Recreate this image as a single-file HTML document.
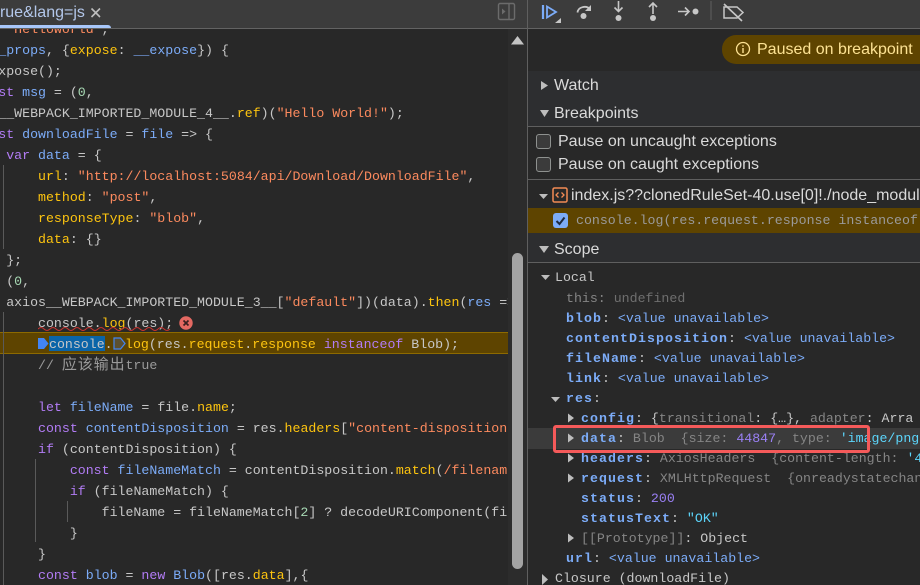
<!DOCTYPE html>
<html style="overflow:hidden"><head><meta charset="utf-8">
<style>
html,body{margin:0;padding:0;background:#282828}
body{width:920px;height:585px;overflow:hidden;font-family:"Liberation Sans","Noto Sans CJK SC",sans-serif}
#wrap{position:absolute;left:0;top:0;width:920px;height:585px;overflow:hidden}
.abs{position:absolute}
#code{position:absolute;left:0;top:29px;width:508px;height:556px;overflow:hidden;background:#282828}
.l,.r{position:absolute;white-space:pre;font-family:"Liberation Mono","Noto Sans CJK SC",monospace;font-size:13.25px;line-height:21px;color:#c7c7c7}
.l{left:-25.6px}
.k{color:#b27cf5}.v{color:#7cacf8}.p{color:#fdc40f}.s{color:#fc8a5e}.n{color:#a8dab5}.c{color:#9a9a9a}
.r b{color:#7cacf8;letter-spacing:1.05px;font-weight:bold}
.u{color:#7cacf8}.g{color:#858585}.d{color:#6f6f6f}.w{color:#c7c7c7}.num{color:#9a80f5}.str{color:#5cd5fb}
.h{position:absolute;left:528px;width:392px;background:#2d2e30}
.sf{position:absolute;white-space:pre;font-size:16px;line-height:20px;color:#dadada}
.cb{position:absolute;left:536px;width:13px;height:13px;border:1px solid #8e918f;border-radius:3px;background:#3b3b3b}
.guide{position:absolute;width:1px;background:#5a5a5a}
</style></head><body><div id="wrap">

<!-- toolbars -->
<div class="abs" style="left:0;top:0;width:920px;height:28px;background:#3c3c3c"></div>
<div class="abs" style="left:0;top:28px;width:920px;height:1px;background:#636363"></div>
<div class="sf" style="left:-4.500px;top:3px;color:#b3c7ea">true&amp;lang=js</div>
<svg class="abs" style="left:90px;top:7px" width="12" height="12"><path d="M1.500 1.500L10 10M10 1.500L1.500 10" stroke="#bdbdbd" stroke-width="1.600" fill="none"/></svg>
<div class="abs" style="left:0;top:25px;width:111px;height:3px;background:#a8c7fa;border-radius:0 3px 0 0"></div>

<svg class="abs" style="left:497px;top:2px" width="20" height="20"><rect x="1.500" y="1.500" width="16" height="16" rx="1.500" fill="none" stroke="#6b6b6b" stroke-width="1.400"/><path d="M12 2v15" stroke="#6b6b6b" stroke-width="1.400"/><path d="M5 6.500l3.500 3-3.500 3z" fill="#6b6b6b"/></svg>

<!-- code -->
<div id="code">
<div class="l" style="top:-10.500px">    <span class="s">"HelloWorld"</span>,</div>
<div class="l" style="top:10.500px">   <span class="v">_props</span>, {<span class="p">expose</span>: <span class="v">__expose</span>}) {</div>
<div class="l" style="top:31.500px">   xpose();</div>
<div class="l" style="top:52.500px"><span class="k">   st</span> <span class="v">msg</span> = (<span class="n">0</span>,</div>
<div class="l" style="top:73.500px">   __WEBPACK_IMPORTED_MODULE_4__.<span class="p">ref</span>)(<span class="s">"Hello World!"</span>);</div>
<div class="l" style="top:94.500px"><span class="k">   st</span> <span class="v">downloadFile</span> = <span class="v">file</span> =&gt; {</div>
<div class="l" style="top:115.500px">    <span class="k">var</span> <span class="v">data</span> = {</div>
<div class="l" style="top:136.500px">        <span class="p">url</span>: <span class="s">"http://localhost:5084/api/Download/DownloadFile"</span>,</div>
<div class="l" style="top:157.500px">        <span class="p">method</span>: <span class="s">"post"</span>,</div>
<div class="l" style="top:178.500px">        <span class="p">responseType</span>: <span class="s">"blob"</span>,</div>
<div class="l" style="top:199.500px">        <span class="p">data</span>: {}</div>
<div class="l" style="top:220.500px">    };</div>
<div class="l" style="top:241.500px">    (<span class="n">0</span>,</div>
<div class="l" style="top:262.500px">    axios__WEBPACK_IMPORTED_MODULE_3__[<span class="s">"default"</span>])(data).<span class="p">then</span>(<span class="v">res</span> =&gt; {</div>
<div class="l" style="top:283.500px">        console.<span class="p">log</span>(res);</div>
<div class="abs" style="left:0;top:303px;width:508px;height:22px;box-sizing:border-box;background:#5e4400;border-top:1px solid #8d6a00;border-bottom:1px solid #8d6a00"></div>
<div class="abs" style="left:49px;top:307px;width:56px;height:15px;background:#0a64a8"></div>
<div class="l" style="left:49px;top:304.500px">console.</div>
<div class="l" style="left:125px;top:304.500px"><span class="p">log</span>(res.<span class="p">request</span>.<span class="p">response</span> <span class="k">instanceof</span> Blob);</div>
<div class="l c" style="top:325.500px">        // <span style="font-size:15px;letter-spacing:.9px">应该输出</span>true</div>
<div class="l" style="top:367.500px">        <span class="k">let</span> <span class="v">fileName</span> = file.<span class="p">name</span>;</div>
<div class="l" style="top:388.500px">        <span class="k">const</span> <span class="v">contentDisposition</span> = res.<span class="p">headers</span>[<span class="s">"content-disposition"</span>];</div>
<div class="l" style="top:409.500px">        <span class="k">if</span> (contentDisposition) {</div>
<div class="l" style="top:430.500px">            <span class="k">const</span> <span class="v">fileNameMatch</span> = contentDisposition.<span class="p">match</span>(<span class="s">/filename</span></div>
<div class="l" style="top:451.500px">            <span class="k">if</span> (fileNameMatch) {</div>
<div class="l" style="top:472.500px">                fileName = fileNameMatch[<span class="n">2</span>] ? decodeURIComponent(fileName</div>
<div class="l" style="top:493.500px">            }</div>
<div class="l" style="top:514.500px">        }</div>
<div class="l" style="top:535.500px">        <span class="k">const</span> <span class="v">blob</span> = <span class="k">new</span> <span class="v">Blob</span>([res.<span class="p">data</span>],{</div>
</div>

<div class="guide" style="left:3px;top:165px;height:84px"></div>
<div class="guide" style="left:3px;top:312px;height:273px"></div>
<div class="guide" style="left:35px;top:459px;height:83px"></div>
<div class="guide" style="left:67px;top:501px;height:21px"></div>

<!-- squiggle, error, markers -->
<svg class="abs" style="left:38px;top:326px" width="136" height="5"><path d="M0 3q3-3 6 0t6 0 6 0 6 0 6 0 6 0 6 0 6 0 6 0 6 0 6 0 6 0 6 0 6 0 6 0 6 0 6 0 6 0 6 0 6 0 6 0 6 0" stroke="#c8332f" stroke-width="1" fill="none"/></svg>
<svg class="abs" style="left:179px;top:316px" width="15" height="15"><circle cx="7" cy="7" r="6.700" fill="#e46962"/><path d="M4.500 4.500l5 5M9.500 4.500l-5 5" stroke="#3a2020" stroke-width="1.700"/></svg>
<svg class="abs" style="left:37px;top:337px" width="12" height="13"><path d="M1 1h6l4.500 5.500L7 12H1z" fill="#4285f4"/></svg>
<svg class="abs" style="left:113px;top:337px" width="13" height="13"><path d="M1 1h6.500l4.500 5.500L7.500 12H1z" fill="#5c5030" stroke="#4285f4" stroke-width="1.200"/></svg>

<!-- scrollbar -->
<div class="abs" style="left:508px;top:29px;width:19px;height:556px;background:#2c2c2c"></div>
<svg class="abs" style="left:511px;top:36px" width="13" height="9"><path d="M6.500 0L13 8.500H0z" fill="#c4c4c4"/></svg>
<div class="abs" style="left:512px;top:253px;width:11px;height:316px;background:#a3a3a3;border-radius:6px"></div>

<!-- divider -->
<div class="abs" style="left:527px;top:0;width:1px;height:585px;background:#5f5f5f"></div>

<!-- debugger toolbar icons -->
<svg class="abs" style="left:536px;top:0" width="210" height="26">
<path d="M7 5v14" stroke="#7cacf8" stroke-width="2.200" fill="none"/>
<path d="M11 6.500L20 12l-9 5.500z" stroke="#7cacf8" stroke-width="1.800" fill="none"/>
<path d="M19 23l6-5v5z" fill="#c7c7c7"/>
<path d="M41.500 12.500C42 7 50 5 54 9" stroke="#c7c7c7" stroke-width="1.800" fill="none"/>
<path d="M55 5v6h-6z" fill="#c7c7c7"/>
<circle cx="47.500" cy="16" r="3" fill="#c7c7c7"/>
<path d="M82.500 1v10M78.500 7.500l4 4 4-4" stroke="#c7c7c7" stroke-width="1.600" fill="none"/>
<circle cx="82.500" cy="18" r="3" fill="#c7c7c7"/>
<path d="M117 14V3.500M113 7l4-4 4 4" stroke="#c7c7c7" stroke-width="1.600" fill="none"/>
<circle cx="117" cy="18" r="3" fill="#c7c7c7"/>
<path d="M142 11.500h11M149 7.500l4 4-4 4" stroke="#c7c7c7" stroke-width="1.600" fill="none"/>
<circle cx="159.500" cy="11.500" r="3" fill="#c7c7c7"/>
<path d="M175 1v19" stroke="#5f5f5f" stroke-width="1"/>
<path d="M188 7h13l6 5.500-6 5.500h-13z" stroke="#c7c7c7" stroke-width="1.500" fill="none"/>
<path d="M188 4l18 17" stroke="#c7c7c7" stroke-width="1.600" fill="none"/>
</svg>

<!-- paused badge -->
<div class="abs" style="left:722px;top:35px;width:198px;height:29px;background:#5e4400;border-radius:14px 0 0 14px"></div>
<svg class="abs" style="left:735px;top:41px" width="16" height="16"><circle cx="8" cy="8" r="6.500" stroke="#fde293" stroke-width="1.300" fill="none"/><path d="M8 7v5M8 4.200v1.600" stroke="#fde293" stroke-width="1.400"/></svg>
<div class="sf" style="left:757px;top:40px;color:#fde293">Paused on breakpoint</div>

<!-- section headers -->
<div class="h" style="top:71px;height:55px"></div>
<div class="abs" style="left:528px;top:126px;width:392px;height:1px;background:#5f5f5f"></div>
<div class="abs" style="left:528px;top:179px;width:392px;height:1px;background:#5f5f5f"></div>
<div class="abs" style="left:528px;top:208px;width:392px;height:25px;background:#5e4400"></div>
<div class="h" style="top:233px;height:29px"></div>
<div class="abs" style="left:528px;top:262px;width:392px;height:1px;background:#5f5f5f"></div>

<svg class="abs" style="left:528px;top:71px" width="60" height="340">
<path d="M13 10l7 4.500-7 4.500z" fill="#bdbdbd"/>
<path d="M12 39h9l-4.500 7z" fill="#bdbdbd"/>
<path d="M11 123h9l-4.500 5z" fill="#bdbdbd"/>
<path d="M11 175h10l-5 7z" fill="#bdbdbd"/>
<path d="M13 204h9l-4.500 5z" fill="#bdbdbd"/>
<path d="M23 326h9l-4.500 5z" fill="#bdbdbd"/>
</svg>

<div class="sf" style="left:554px;top:76px">Watch</div>
<div class="sf" style="left:554px;top:104px">Breakpoints</div>
<div class="cb" style="top:134px"></div>
<div class="cb" style="top:157px"></div>
<div class="sf" style="left:558px;top:132px">Pause on uncaught exceptions</div>
<div class="sf" style="left:558px;top:155px">Pause on caught exceptions</div>

<svg class="abs" style="left:552px;top:187px" width="16" height="17"><rect x="1" y="1" width="14" height="14" rx="1.500" fill="none" stroke="#f28b54" stroke-width="1.500"/><path d="M6.500 5.500L4 8l2.500 2.500M9.500 5.500L12 8l-2.500 2.500" stroke="#f28b54" stroke-width="1.300" fill="none"/></svg>
<div class="sf" style="left:571px;top:186px">index.js??clonedRuleSet-40.use[0]!./node_modules</div>

<div class="abs" style="left:553px;top:213px;width:15px;height:15px;background:#7cacf8;border-radius:3px"></div>
<svg class="abs" style="left:553px;top:213px" width="15" height="15"><path d="M3.500 8l3 3 5-6.500" stroke="#1d2a40" stroke-width="2" fill="none"/></svg>
<div class="r" style="left:576px;top:210px;color:#9a9a9a">console.log(res.request.response instanceof</div>
<div class="sf" style="left:554px;top:240px">Scope</div>

<!-- scope tree -->
<div class="abs" style="left:528px;top:428px;width:392px;height:21px;background:#3b3b3b"></div>
<div class="r" style="left:555px;top:267px">Local</div>
<div class="r g" style="left:566px;top:288px">this: <span class="d">undefined</span></div>
<div class="r" style="left:566px;top:308px"><b>blob</b><span class="w">:</span> <span class="u">&lt;value unavailable&gt;</span></div>
<div class="r" style="left:566px;top:328px"><b>contentDisposition</b><span class="w">:</span> <span class="u">&lt;value unavailable&gt;</span></div>
<div class="r" style="left:566px;top:348px"><b>fileName</b><span class="w">:</span> <span class="u">&lt;value unavailable&gt;</span></div>
<div class="r" style="left:566px;top:368px"><b>link</b><span class="w">:</span> <span class="u">&lt;value unavailable&gt;</span></div>
<div class="r" style="left:566px;top:388px"><b>res</b><span class="w">:</span></div>
<div class="r" style="left:581px;top:408px"><b>config</b><span class="w">:</span> <span class="w">{</span><span class="g">transitional</span><span class="w">:</span> <span class="w">{…},</span> <span class="g">adapter</span><span class="w">:</span> <span class="w">Arra</span></div>
<div class="r" style="left:581px;top:428px"><b>data</b><span class="w">:</span> <span class="g">Blob</span>  <span class="g">{size: </span><span class="num">44847</span><span class="g">, type: </span><span class="str">'image/png</span></div>
<div class="r" style="left:581px;top:448px"><b>headers</b><span class="w">:</span> <span class="g">AxiosHeaders</span>  <span class="g">{content-length: </span><span class="str">'4</span></div>
<div class="r" style="left:581px;top:468px"><b>request</b><span class="w">:</span> <span class="g">XMLHttpRequest</span>  <span class="g">{onreadystatechan</span></div>
<div class="r" style="left:581px;top:488px"><b>status</b><span class="w">:</span> <span class="num">200</span></div>
<div class="r" style="left:581px;top:508px"><b>statusText</b><span class="w">:</span> <span class="str">"OK"</span></div>
<div class="r" style="left:581px;top:528px"><span class="g">[[Prototype]]</span><span class="w">: Object</span></div>
<div class="r" style="left:566px;top:548px"><b>url</b><span class="w">:</span> <span class="u">&lt;value unavailable&gt;</span></div>
<div class="r" style="left:555px;top:568px">Closure (downloadFile)</div>

<svg class="abs" style="left:540px;top:570px" width="12" height="15">
<path d="M2 4l6 5.500-6 5.500z" fill="#bdbdbd"/>
</svg>
<svg class="abs" style="left:566px;top:410px" width="12" height="145">
<path d="M2 3.500l6 4.500-6 4.500zM2 23.500l6 4.500-6 4.500zM2 43.500l6 4.500-6 4.500zM2 63.500l6 4.500-6 4.500zM2 123.500l6 4.500-6 4.500z" fill="#bdbdbd"/>
</svg>

<!-- red annotation -->
<div class="abs" style="left:553px;top:425px;width:317px;height:28px;box-sizing:border-box;border:3px solid #f55a5a;border-radius:3px"></div>

</div></body></html>
